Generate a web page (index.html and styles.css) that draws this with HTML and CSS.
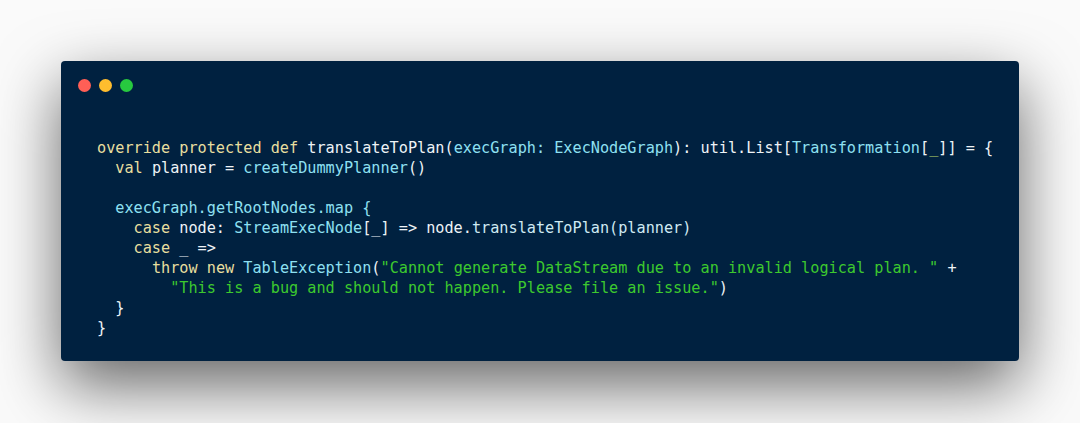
FILE: index.html
```html
<!DOCTYPE html>
<html>
<head>
<meta charset="utf-8">
<link rel="stylesheet" href="styles.css">
</head>
<body>
<div class="stage">
  <div class="window">
    <div class="titlebar">
      <span class="dot red"></span>
      <span class="dot yellow"></span>
      <span class="dot green"></span>
    </div>
<pre class="code"><span class="k">override protected def</span> translateToPlan(<span class="t">execGraph:</span> <span class="t">ExecNodeGraph</span>): util.List[<span class="t">Transformation</span>[<span class="u">_</span>]] = {
  <span class="k">val</span> planner = <span class="t">createDummyPlanner</span>()

  <span class="t">execGraph.getRootNodes.map {</span>
    <span class="k">case</span> node: <span class="t">StreamExecNode</span>[_] =&gt; node.<span class="l">translateToPlan(planner)</span>
    <span class="k">case</span> _ =&gt;
      <span class="k">throw new</span> <span class="t">TableException</span>(<span class="s">"Cannot generate DataStream due to an invalid logical plan. "</span> +
        <span class="s">"This is a bug and should not happen. Please file an issue."</span>)
  }
}</pre>
  </div>
</div>
</body>
</html>
```
FILE: styles.css
```css
html, body {
  margin: 0;
  padding: 0;
  background: #fafafa;
}
.stage {
  width: 1080px;
  height: 423px;
  padding: 61px 0 0 61px;
  box-sizing: border-box;
  overflow: hidden;
}
.window {
  width: 958px;
  height: 300px;
  background: #002140;
  border-radius: 4px;
  box-shadow: 0 24px 64px rgba(0, 0, 0, 0.6);
  box-sizing: border-box;
}
.titlebar {
  height: 48px;
  display: flex;
  align-items: center;
  gap: 8px;
  padding-left: 17px;
}
.dot {
  width: 13px;
  height: 13px;
  border-radius: 50%;
  display: block;
}
.red { background: #ff5f56; }
.yellow { background: #ffbd2e; }
.green { background: #27c93f; }
.code {
  margin: 0;
  padding: 29px 0 0 36px;
  font-family: "DejaVu Sans Mono", monospace;
  font-size: 15.2px;
  line-height: 20px;
  color: #eef3f7;
  white-space: pre;
}
.k { color: #e8df9f; }
.t { color: #8ee0f2; }
.l { color: #cfeaf3; }
.s { color: #3dc92e; }
.u { color: #b8d86a; }
```
